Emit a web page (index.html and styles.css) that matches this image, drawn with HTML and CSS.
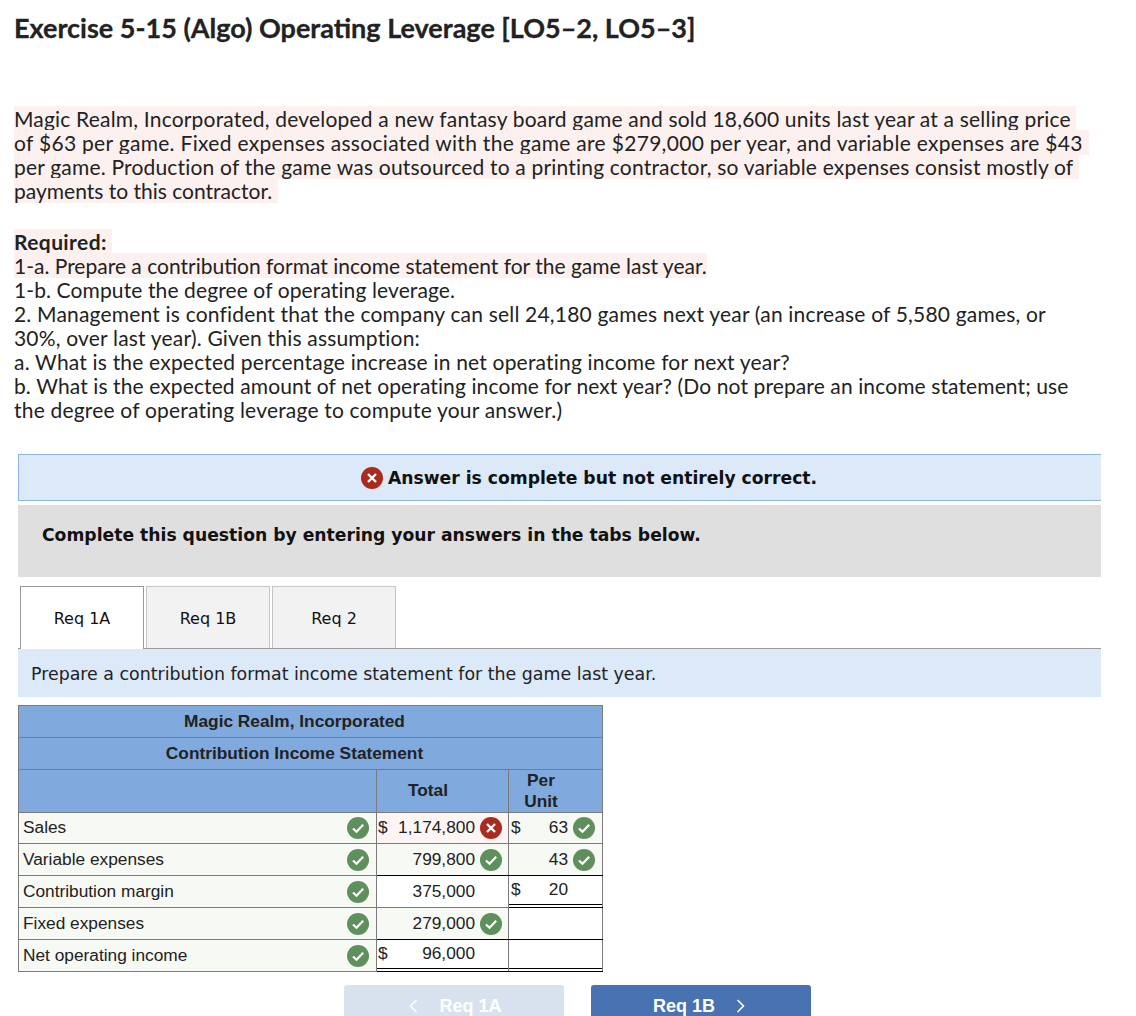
FILE: index.html
```html
<!DOCTYPE html>
<html lang="en">
<head>
<meta charset="utf-8">
<title>Exercise 5-15</title>
<link rel="stylesheet" href="styles.css">
</head>
<body>
<svg class="defs" width="0" height="0" aria-hidden="true">
  <symbol id="ok" viewBox="0 0 22 22"><circle cx="11" cy="11" r="11" fill="#5f8f5c"/><path d="M6 11.5l3.5 3.3L16.2 7.8" fill="none" stroke="#fff" stroke-width="2.2"/></symbol>
  <symbol id="bad" viewBox="0 0 22 22"><circle cx="11" cy="11" r="11" fill="#a92a1f"/><path d="M7 7l8 8M15 7l-8 8" fill="none" stroke="#fff" stroke-width="2.4"/></symbol>
</svg>
<main class="page">
  <h1 class="title">Exercise 5-15 (Algo) Operating Leverage [LO5–2, LO5–3]</h1>
  <p class="story"><span class="hl">Magic Realm, Incorporated, developed a new fantasy board game and sold 18,600 units last year at a selling price&nbsp;<br><span class="wide">of $63 per game. Fixed expenses associated with the game are $279,000 per year, and variable expenses are $43&nbsp;</span><br>per game. Production of the game was outsourced to a printing contractor, so variable expenses consist mostly of&nbsp;<br><span class="tight">payments to this contractor.&nbsp;</span></span></p>
  <div class="required">
    <div><strong class="hl">Required:&nbsp;</strong></div>
    <div><span class="hl tight">1-a. Prepare a contribution format income statement for the game last year.</span></div>
    <div><span class="slight">1-b. Compute the degree of operating leverage.</span></div>
    <div>2. Management is confident that the company can sell 24,180 games next year (an increase of 5,580 games, or<br>30%, over last year). Given this assumption:</div>
    <div>a. What is the expected percentage increase in net operating income for next year?</div>
    <div><span class="slight">b. What is the expected amount of net operating income for next year? (Do not prepare an income statement; use</span><br>the degree of operating leverage to compute your answer.)</div>
  </div>
  <section class="panels">
    <div class="banner"><svg class="icon"><use href="#bad"/></svg><strong>Answer is complete but not entirely correct.</strong></div>
    <div class="instruction">Complete this question by entering your answers in the tabs below.</div>
    <div class="tabs">
      <div class="tab active">Req 1A</div>
      <div class="tab">Req 1B</div>
      <div class="tab">Req 2</div>
    </div>
    <div class="prompt">Prepare a contribution format income statement for the game last year.</div>
    <table class="sheet">
      <colgroup><col class="c-label"><col class="c-total"><col class="c-unit"></colgroup>
      <thead>
        <tr class="h32"><th colspan="3"><span class="head-shift">Magic Realm, Incorporated</span></th></tr>
        <tr class="h32"><th colspan="3"><span class="head-shift">Contribution Income Statement</span></th></tr>
        <tr class="h43"><th></th><th class="col-head total-head">Total</th><th class="col-head">Per<br>Unit</th></tr>
      </thead>
      <tbody>
        <tr class="first">
          <td class="label"><div class="cell"><span>Sales</span><svg class="icon"><use href="#ok"/></svg></div></td>
          <td class="val wrong"><div class="cell"><span class="cur">$</span><span class="num">1,174,800</span><svg class="icon"><use href="#bad"/></svg></div></td>
          <td class="val unit shaded"><div class="cell"><span class="cur">$</span><span class="num">63</span><svg class="icon"><use href="#ok"/></svg></div></td>
        </tr>
        <tr>
          <td class="label"><div class="cell"><span>Variable expenses</span><svg class="icon"><use href="#ok"/></svg></div></td>
          <td class="val shaded under"><div class="cell"><span class="num">799,800</span><svg class="icon"><use href="#ok"/></svg></div></td>
          <td class="val unit shaded under"><div class="cell"><span class="num">43</span><svg class="icon"><use href="#ok"/></svg></div></td>
        </tr>
        <tr>
          <td class="label"><div class="cell"><span>Contribution margin</span><svg class="icon"><use href="#ok"/></svg></div></td>
          <td class="val plain"><div class="cell"><span class="num">375,000</span><span class="gap"></span></div></td>
          <td class="val unit plain double"><div class="cell lift"><span class="cur">$</span><span class="num">20</span><span class="gap"></span></div></td>
        </tr>
        <tr>
          <td class="label"><div class="cell"><span>Fixed expenses</span><svg class="icon"><use href="#ok"/></svg></div></td>
          <td class="val shaded under"><div class="cell"><span class="num">279,000</span><svg class="icon"><use href="#ok"/></svg></div></td>
          <td class="val plain under"></td>
        </tr>
        <tr>
          <td class="label"><div class="cell"><span>Net operating income</span><svg class="icon"><use href="#ok"/></svg></div></td>
          <td class="val plain double"><div class="cell lift"><span class="cur">$</span><span class="num">96,000</span><span class="gap"></span></div></td>
          <td class="val plain double"></td>
        </tr>
      </tbody>
    </table>
    <div class="nav">
      <div class="btn off"><svg class="chev" viewBox="0 0 9 14"><path d="M7.5 1L1.5 7l6 6"/></svg><span>Req 1A</span></div>
      <div class="btn on"><span>Req 1B</span><svg class="chev" viewBox="0 0 9 14"><path d="M1.5 1l6 6-6 6"/></svg></div>
    </div>
  </section>
</main>
</body>
</html>
```
FILE: styles.css
```css
html, body { margin: 0; padding: 0; background: #fff; }
body { height: 1016px; overflow: hidden; }
.defs { position: absolute; }
.page { padding: 0 14px; color: #222; font-family: Lato, "Open Sans", sans-serif; }
.title { margin: 0; padding-top: 11px; height: 107px; box-sizing: border-box; font-size: 27px; line-height: 34px; font-weight: 700; -webkit-text-stroke: 0.3px #222; }
.story { margin: 0; font-size: 21px; letter-spacing: 0.19px; line-height: 24px; white-space: nowrap; }
.hl { background: #fcf1ef; }
.wide { letter-spacing: 0.3px; }
.tight { letter-spacing: 0px; }
.slight { letter-spacing: 0.11px; }
.required { margin-top: 27px; font-size: 21px; letter-spacing: 0.19px; line-height: 24px; white-space: nowrap; }
.required strong { font-weight: 700; letter-spacing: 0.4px; }
.panels { margin: 32px 21px 0 4px; font-family: "DejaVu Sans", Verdana, sans-serif; color: #111; }
.banner { box-sizing: border-box; height: 47px; background: #dce9f8; border-top: 1px solid #8fb3de; border-bottom: 1px solid #8fb3de; border-left: 1px solid #8fb3de; display: flex; align-items: center; justify-content: center; gap: 5px; font-size: 17.2px; padding-left: 58px; }
.banner .icon { width: 22px; height: 22px; }
.instruction { margin-top: 4px; height: 72px; box-sizing: border-box; background: #dfdfdf; padding: 18px 24px; font-size: 17.2px; line-height: 24px; font-weight: 700; }
.tabs { display: flex; gap: 2px; margin-top: 9px; padding-left: 2px; height: 63px; box-sizing: border-box; border-bottom: 1px solid #999; }
.tab { box-sizing: border-box; width: 124px; height: 62px; display: flex; align-items: center; justify-content: center; background: #f2f2f2; border: 1px solid #c4c4c4; border-bottom: 0; font-size: 16px; padding-top: 1px; }
.tab.active { background: #fff; border-color: #999; height: 63px; position: relative; padding-top: 0; }
.prompt { height: 48px; background: #dce9f8; padding-left: 13px; font-size: 17.4px; line-height: 50px; color: #222; }
.sheet { margin-top: 8px; width: 584px; table-layout: fixed; border-collapse: collapse; font-family: "Liberation Sans", Arial, sans-serif; font-size: 17.3px; color: #222; }
.c-label { width: 358px; }
.c-total { width: 132px; }
.c-unit { width: 94px; }
.sheet th { background: #80a9de; border: 1px solid #7b7b7b; padding: 0; font-weight: 700; line-height: 21px; color: #222; }
.sheet th.col-head { padding-right: 29px; }
.sheet th.total-head { padding-bottom: 2px; }
.h32 { height: 32px; }
.h43 { height: 43px; }
.head-shift { display: inline-block; margin-right: 32px; padding-bottom: 1px; }
.sheet td { height: 32px; box-sizing: border-box; padding: 0; border: 1px solid #7b7b7b; background: #f7f9f5; vertical-align: top; }
.sheet tr.first td { height: 31px; }
.cell { display: flex; align-items: center; height: 31px; }
.first .cell { height: 29px; }
.cell.lift { margin-top: -2px; }
.icon { width: 22px; height: 22px; flex: none; display: block; }
.label .cell { padding: 0 7px 0 4px; justify-content: space-between; }
.val .cell { padding: 0 6px 0 1px; }
.cur { flex: none; }
.num { flex: 1; text-align: right; padding-right: 5px; }
.unit .cell { padding-right: 7px; padding-left: 2px; }
.gap { width: 22px; flex: none; }
.sheet td.wrong { background: #fdf5f3; }
.sheet td.plain { background: #fff; }
.sheet td.under { border-bottom: 1px solid #000; }
.sheet td.double { border-bottom: 1px solid #000; box-shadow: inset 0 -2px 0 #fff, inset 0 -3px 0 #000; }
.nav { display: flex; gap: 27px; margin: 13px 0 0 326px; }
.btn { box-sizing: border-box; width: 220px; height: 50px; border-radius: 3px 3px 0 0; display: flex; justify-content: center; gap: 21px; padding-top: 8px; font-family: "Liberation Sans", Arial, sans-serif; font-size: 18px; font-weight: 700; color: #fff; line-height: 26px; }
.btn.off { background: #d8e2ef; padding-left: 3px; }
.btn.on { background: #4872b2; padding-right: 4px; }
.chev { width: 9px; height: 14px; margin-top: 6px; fill: none; stroke: #fff; stroke-width: 1.6; }
```
